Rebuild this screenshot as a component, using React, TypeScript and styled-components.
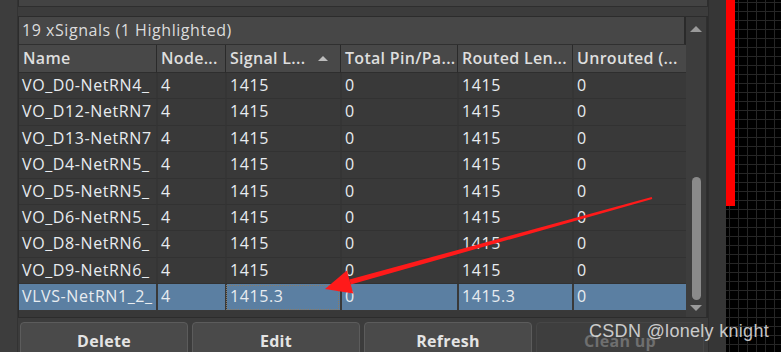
import React from "react";
import styled, { createGlobalStyle } from "styled-components";

const GlobalStyle = createGlobalStyle`
  html, body {
    margin: 0;
    padding: 0;
    background: #3c3c3c;
    overflow: hidden;
  }
  * {
    box-sizing: border-box;
  }
`;

const Page = styled.div`
  position: relative;
  width: 781px;
  height: 352px;
  display: flex;
  flex-direction: row;
  font-family: "Open Sans", "Noto Sans", sans-serif;
  background: #3c3c3c;
  overflow: hidden;
`;

const LeftStrip = styled.div`
  width: 18px;
  background: #3d3d3d;
  border-right: 1px solid #333;
`;

const MainColumn = styled.div`
  width: 690px;
  display: flex;
  flex-direction: column;
  overflow: hidden;
  > * {
    flex: none;
  }
`;

const TopPanel = styled.div`
  height: 7px;
  background: #434343;
  border: 1px solid #2e2e2e;
  border-top: none;
`;

const SignalsPanel = styled.div`
  margin-top: 9px;
  height: 302px;
  display: flex;
  flex-direction: row;
  border: 1px solid #2c2c2c;
  background: #383838;
`;

const TableArea = styled.div`
  width: 667px;
  display: flex;
  flex-direction: column;
`;

const TitleBar = styled.div`
  height: 28px;
  background: #474747;
  border-bottom: 1px solid #303030;
  color: #dcdcdc;
  font-size: 16px;
  letter-spacing: 0.55px;
  line-height: 27px;
  padding-left: 3px;
  border-right: 2px solid #2a2a2a;
`;

const Grid = styled.div`
  display: grid;
  grid-template-columns: 137px 69px 115px 117px 115px 114px;
`;

const HeaderCell = styled.div<{ $first?: boolean }>`
  height: 28px;
  background: #484848;
  border-bottom: 1px solid #2e2e2e;
  border-left: ${(p) => (p.$first ? "none" : "1px solid #2a2a2a")};
  color: #dedede;
  font-size: 16px;
  font-weight: 600;
  letter-spacing: 0.3px;
  line-height: 27px;
  padding-left: 4px;
  white-space: nowrap;
  overflow: hidden;
  display: flex;
  align-items: center;
  justify-content: space-between;
  padding-right: 12px;
`;

const SortArrow = styled.span`
  flex: none;
  width: 0;
  height: 0;
  border-left: 5px solid transparent;
  border-right: 5px solid transparent;
  border-bottom: 5px solid #bdbdbd;
`;

const Cell = styled.div<{ $hl?: boolean; $first?: boolean; $focus?: boolean }>`
  height: 26.4px;
  background: ${(p) => (p.$hl ? "#5b7fa2" : "#393939")};
  border-bottom: 1px solid ${(p) => (p.$hl ? "#393939" : "#323232")};
  border-left: ${(p) => (p.$first ? "none" : `2px solid ${p.$hl ? "#393939" : "#353535"}`)};
  outline: ${(p) => (p.$focus ? "1px dotted #8a7b66" : "none")};
  outline-offset: -2px;
  color: #e8ecf0;
  font-size: 16px;
  letter-spacing: 0.6px;
  line-height: 25px;
  padding-left: 3px;
  white-space: nowrap;
  overflow: hidden;
`;

const ScrollBar = styled.div`
  width: 22px;
  background: #3d3d3d;
  display: flex;
  flex-direction: column;
  align-items: center;
  padding-top: 9px;
  border-right: 1px solid #2f2f2f;
`;

const ScrollArrow = styled.div<{ $down?: boolean }>`
  width: 0;
  height: 0;
  border-left: 6px solid transparent;
  border-right: 6px solid transparent;
  ${(p) =>
    p.$down
      ? "border-top: 6px solid #9a9a9a;"
      : "border-bottom: 6px solid #9a9a9a;"}
`;

const ScrollTrack = styled.div`
  flex: 1;
  width: 100%;
  display: flex;
  flex-direction: column;
  justify-content: flex-end;
  align-items: center;
  padding: 0 0 5px;
`;

const Thumb = styled.div`
  width: 9px;
  height: 123px;
  border-radius: 5px;
  background: #8a8a8a;
`;

const ScrollFoot = styled.div`
  height: 6px;
`;

const ButtonRow = styled.div`
  margin-top: 4px;
  display: flex;
  gap: 4px;
  padding-left: 2px;
`;

const Button = styled.div<{ $disabled?: boolean }>`
  width: 168px;
  height: 38px;
  border: 1px solid ${(p) => (p.$disabled ? "#464646" : "#5c5c5c")};
  border-radius: 4px;
  background: ${(p) => (p.$disabled ? "#3e3e3e" : "#4a4a4a")};
  color: ${(p) => (p.$disabled ? "#6f6f6f" : "#e4e4e4")};
  font-size: 16px;
  font-weight: 700;
  letter-spacing: 0.3px;
  text-align: center;
  line-height: 36px;
`;

const Separator = styled.div`
  width: 18px;
  background: #363636;
  border-left: 1px solid #2e2e2e;
`;

const Canvas = styled.div`
  position: relative;
  flex: 1;
  background-color: #000;
  background-image: linear-gradient(#262626 1px, transparent 1px),
    linear-gradient(90deg, #262626 1px, transparent 1px);
  background-size: 9px 9px;
  background-position: 3px 2px;
`;

const Trace = styled.div`
  position: absolute;
  left: 0;
  top: 0;
  width: 9px;
  height: 206px;
  background: #ff0000;
`;

const Overlay = styled.svg`
  position: absolute;
  left: 0;
  top: 0;
  pointer-events: none;
`;

const Watermark = styled.div`
  position: absolute;
  left: 589px;
  top: 321px;
  color: rgba(230, 230, 230, 0.85);
  font-family: "Liberation Sans", Arial, sans-serif;
  font-size: 18px;
  letter-spacing: 0.3px;
`;

const headers = ["Name", "Node...", "Signal L...", "Total Pin/Pa...", "Routed Len...", "Unrouted (..."];

const rows = [
  ["VO_D0-NetRN4_", "4", "1415", "0", "1415", "0"],
  ["VO_D12-NetRN7", "4", "1415", "0", "1415", "0"],
  ["VO_D13-NetRN7", "4", "1415", "0", "1415", "0"],
  ["VO_D4-NetRN5_", "4", "1415", "0", "1415", "0"],
  ["VO_D5-NetRN5_", "4", "1415", "0", "1415", "0"],
  ["VO_D6-NetRN5_", "4", "1415", "0", "1415", "0"],
  ["VO_D8-NetRN6_", "4", "1415", "0", "1415", "0"],
  ["VO_D9-NetRN6_", "4", "1415", "0", "1415", "0"],
  ["VLVS-NetRN1_2_", "4", "1415.3", "0", "1415.3", "0"],
];

const buttons = [
  { label: "Delete" },
  { label: "Edit" },
  { label: "Refresh" },
  { label: "Clean up", disabled: true },
];

function arrowShape() {
  const tail = [652, 198];
  const tip = [325, 289];
  const dx = tip[0] - tail[0];
  const dy = tip[1] - tail[1];
  const len = Math.hypot(dx, dy);
  const ux = dx / len;
  const uy = dy / len;
  const px = -uy;
  const py = ux;
  const headLen = 26;
  const base = [tip[0] - ux * headLen, tip[1] - uy * headLen];
  const shaft = [
    [tail[0] + px * 1, tail[1] + py * 1],
    [base[0] + px * 2.6, base[1] + py * 2.6],
    [base[0] - px * 2.6, base[1] - py * 2.6],
    [tail[0] - px * 1, tail[1] - py * 1],
  ];
  const head = [
    tip,
    [base[0] + px * 12, base[1] + py * 12],
    [base[0] - px * 12, base[1] - py * 12],
  ];
  const pts = (a: number[][]) => a.map((p) => p.join(",")).join(" ");
  return { shaft: pts(shaft), head: pts(head) };
}

export default function App() {
  const arrow = arrowShape();
  const last = rows.length - 1;
  return (
    <>
      <GlobalStyle />
      <Page>
        <LeftStrip />
        <MainColumn>
          <TopPanel />
          <SignalsPanel>
            <TableArea>
              <TitleBar>19 xSignals (1 Highlighted)</TitleBar>
              <Grid>
                {headers.map((h, i) => (
                  <HeaderCell key={h} $first={i === 0}>
                    {h}
                    {i === 2 && <SortArrow />}
                  </HeaderCell>
                ))}
                {rows.map((r, ri) =>
                  r.map((c, ci) => (
                    <Cell
                      key={`${ri}-${ci}`}
                      $first={ci === 0}
                      $hl={ri === last}
                      $focus={ri === last && ci === 2}
                    >
                      {c}
                    </Cell>
                  ))
                )}
              </Grid>
            </TableArea>
            <ScrollBar>
              <ScrollArrow />
              <ScrollTrack>
                <Thumb />
              </ScrollTrack>
              <ScrollArrow $down />
              <ScrollFoot />
            </ScrollBar>
          </SignalsPanel>
          <ButtonRow>
            {buttons.map((b) => (
              <Button key={b.label} $disabled={b.disabled}>
                {b.label}
              </Button>
            ))}
          </ButtonRow>
        </MainColumn>
        <Separator />
        <Canvas>
          <Trace />
        </Canvas>
        <Overlay width="781" height="352" viewBox="0 0 781 352">
          <polygon points={arrow.shaft} fill="#ff1a1a" />
          <polygon points={arrow.head} fill="#ff1a1a" />
        </Overlay>
        <Watermark>CSDN @lonely knight</Watermark>
      </Page>
    </>
  );
}
